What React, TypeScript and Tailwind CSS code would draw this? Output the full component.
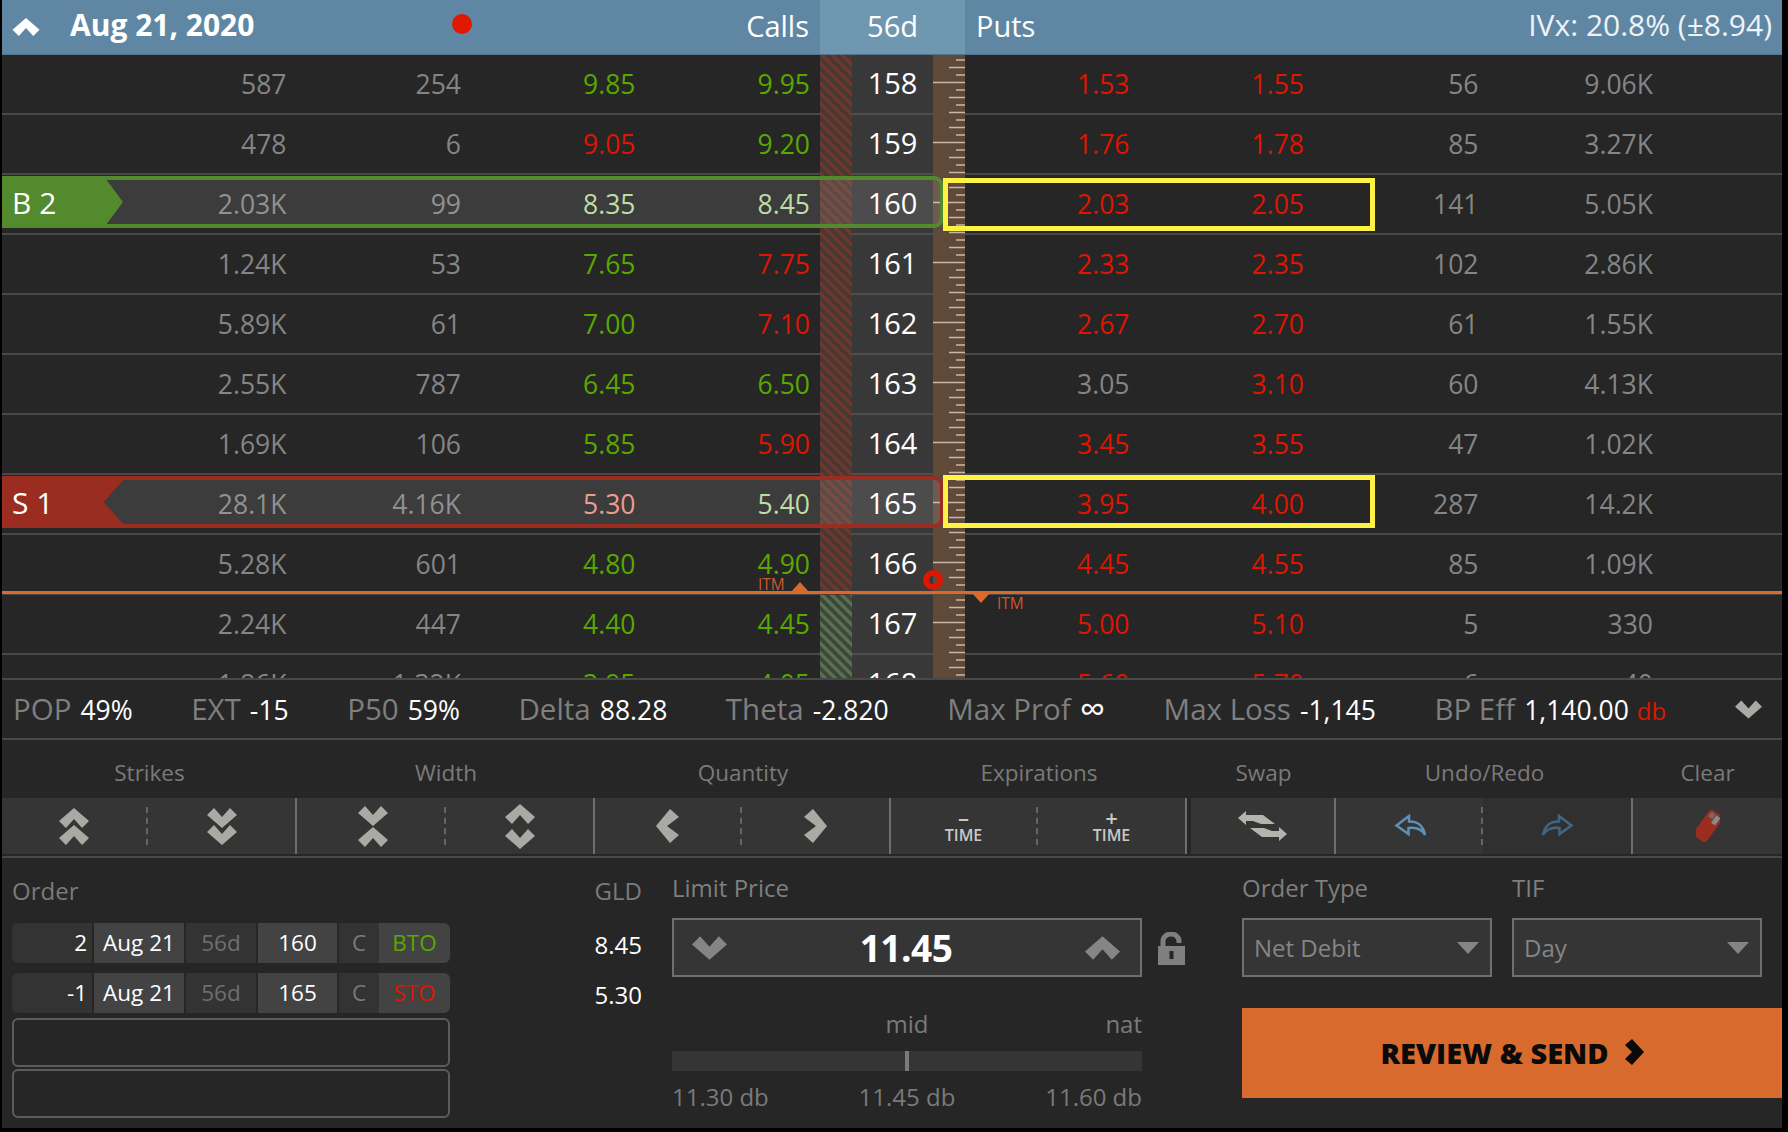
import React from "react";

const tone: Record<string, string> = {
  g: "text-[#58a800]",
  r: "text-[#dc1600]",
  n: "text-[#858585]",
  l: "text-[#b7d99b]",
  p: "text-[#ec8f82]",
};

type Row = {
  strike: string;
  calls: [string, string, string, string];
  puts: [string, string, string, string];
  c: [string, string];
  p: [string, string];
  itm?: boolean;
  leg?: "buy" | "sell";
};

const rows: Row[] = [
  { strike: "158", calls: ["587", "254", "9.85", "9.95"], puts: ["1.53", "1.55", "56", "9.06K"], c: ["g", "g"], p: ["r", "r"] },
  { strike: "159", calls: ["478", "6", "9.05", "9.20"], puts: ["1.76", "1.78", "85", "3.27K"], c: ["r", "g"], p: ["r", "r"] },
  { strike: "160", calls: ["2.03K", "99", "8.35", "8.45"], puts: ["2.03", "2.05", "141", "5.05K"], c: ["l", "l"], p: ["r", "r"], leg: "buy" },
  { strike: "161", calls: ["1.24K", "53", "7.65", "7.75"], puts: ["2.33", "2.35", "102", "2.86K"], c: ["g", "r"], p: ["r", "r"] },
  { strike: "162", calls: ["5.89K", "61", "7.00", "7.10"], puts: ["2.67", "2.70", "61", "1.55K"], c: ["g", "r"], p: ["r", "r"] },
  { strike: "163", calls: ["2.55K", "787", "6.45", "6.50"], puts: ["3.05", "3.10", "60", "4.13K"], c: ["g", "g"], p: ["n", "r"] },
  { strike: "164", calls: ["1.69K", "106", "5.85", "5.90"], puts: ["3.45", "3.55", "47", "1.02K"], c: ["g", "r"], p: ["r", "r"] },
  { strike: "165", calls: ["28.1K", "4.16K", "5.30", "5.40"], puts: ["3.95", "4.00", "287", "14.2K"], c: ["p", "l"], p: ["r", "r"], leg: "sell" },
  { strike: "166", calls: ["5.28K", "601", "4.80", "4.90"], puts: ["4.45", "4.55", "85", "1.09K"], c: ["g", "g"], p: ["r", "r"] },
  { strike: "167", calls: ["2.24K", "447", "4.40", "4.45"], puts: ["5.00", "5.10", "5", "330"], c: ["g", "g"], p: ["r", "r"], itm: true },
  { strike: "168", calls: ["1.86K", "1.32K", "3.95", "4.05"], puts: ["5.60", "5.70", "6", "40"], c: ["g", "g"], p: ["r", "r"], itm: true },
];

const ticks = [
  [5, 9],
  [12.5, 16],
  [20, 9],
  [27.5, 32],
  [35, 9],
  [42.5, 16],
  [50, 9],
  [57.5, 16],
];

const Ruler = () => (
  <svg width="32" height="60" className="block">
    {ticks.map(([y, w]) => (
      <rect key={y} x={32 - w} y={y - 0.75} width={w} height="1.5" fill="#c9b6a4" />
    ))}
  </svg>
);

const Cell = ({ children, className = "" }: { children?: React.ReactNode; className?: string }) => (
  <div className={`flex items-center justify-end border-b-2 border-[#484848] pr-[10px] text-[26.5px] leading-none ${className}`}>
    {children}
  </div>
);

const ChainRow = ({ row }: { row: Row }) => (
  <div className="relative grid h-[60px] grid-cols-[120px_174.5px_174.5px_174.5px_174.5px_32px_81px_32px_174.5px_174.5px_174.5px_174.5px_119px]">
    <div className="border-b-2 border-[#484848]" />
    <Cell className="text-[#858585]">{row.calls[0]}</Cell>
    <Cell className="text-[#858585]">{row.calls[1]}</Cell>
    <Cell className={tone[row.c[0]]}>{row.calls[2]}</Cell>
    <Cell className={tone[row.c[1]]}>{row.calls[3]}</Cell>
    <div
      className={
        row.itm
          ? "bg-[repeating-linear-gradient(45deg,#55704c_0,#55704c_3.535px,#3c4639_3.535px,#3c4639_7.071px)]"
          : "bg-[repeating-linear-gradient(45deg,#70362a_0,#70362a_3.535px,#483733_3.535px,#483733_7.071px)]"
      }
    />
    <div className="flex items-center justify-center border-b-2 border-[#4f4f4f] bg-[#383838] pb-[4px] text-[29px] leading-none text-white">
      {row.strike}
    </div>
    <div className="bg-[#5f4939]">
      <Ruler />
    </div>
    <Cell className={tone[row.p[0]]}>{row.puts[0]}</Cell>
    <Cell className={tone[row.p[1]]}>{row.puts[1]}</Cell>
    <Cell className="text-[#858585]">{row.puts[2]}</Cell>
    <Cell className="text-[#858585]">{row.puts[3]}</Cell>
    <div className="border-b-2 border-[#484848]" />

    {row.leg === "buy" && (
      <>
        <div className="absolute left-0 top-[1px] h-[52px] w-[942px] rounded-r-[10px] border-y-4 border-r-4 border-[#548a2e] bg-white/10" />
        <div className="absolute left-0 top-[1px] flex h-[52px] w-[121px] items-center bg-[#548a2e] pl-[10px] text-[30px] text-white [clip-path:polygon(0_0,84%_0,100%_50%,84%_100%,0_100%)]">
          B 2
        </div>
        <div className="absolute left-[941px] top-[3px] h-[53px] w-[432px] border-[5px] border-[#fef344]" />
      </>
    )}
    {row.leg === "sell" && (
      <>
        <div className="absolute left-0 top-[1px] h-[52px] w-[942px] rounded-r-[10px] border-y-4 border-r-4 border-[#9b2d20] bg-white/10" />
        <div className="absolute left-0 top-[1px] flex h-[52px] w-[121px] items-center bg-[#9b2d20] pl-[10px] text-[30px] text-white [clip-path:polygon(0_0,100%_0,100%_8%,84%_50%,100%_92%,100%_100%,0_100%)]">
          S 1
        </div>
        <div className="absolute left-[941px] top-0 h-[53px] w-[432px] border-[5px] border-[#fef344]" />
      </>
    )}
  </div>
);

const stats = [
  ["POP", "49%"],
  ["EXT", "-15"],
  ["P50", "59%"],
  ["Delta", "88.28"],
  ["Theta", "-2.820"],
  ["Max Prof", "∞"],
  ["Max Loss", "-1,145"],
  ["BP Eff", "1,140.00"],
];

const up = (y: number) => `15,${y} 30,${y + 13} 23,${y + 20} 15,${y + 11} 7,${y + 20} 0,${y + 13}`;
const down = (y: number) => `15,${y + 20} 30,${y + 7} 23,${y} 15,${y + 9} 7,${y} 0,${y + 7}`;

const Chevrons = ({
  points,
  w = 30,
  h,
  fill = "#aaaaa4",
  vw = 30,
  vh,
}: {
  points: string[];
  w?: number;
  h: number;
  fill?: string;
  vw?: number;
  vh?: number;
}) => (
  <svg width={w} height={h} viewBox={`0 0 ${vw} ${vh ?? h}`}>
    {points.map((p) => (
      <polygon key={p} points={p} fill={fill} />
    ))}
  </svg>
);

const Time = ({ sign }: { sign: string }) => (
  <div className="flex flex-col items-center text-[#c8c8c4]">
    <span className="h-[14px] text-[22px] font-semibold leading-[14px]">{sign}</span>
    <span className="mt-[3px] text-[16px] font-semibold leading-none">TIME</span>
  </div>
);

const ReplyArrow = ({ color, flip }: { color: string; flip?: boolean }) => (
  <svg width="33" height="24" viewBox="0 0 33 24" fill="none">
    <path
      d="M15 2 L2.5 11.5 L14.5 20 L14.5 14 C22 13 28 15.5 31 21 C29.5 12.5 24 7 15 7.5 Z"
      stroke={color}
      strokeWidth="2.5"
      strokeLinejoin="miter"
      transform={flip ? "matrix(-1 0 0 1 33 0)" : undefined}
    />
  </svg>
);

const Dash = () => <div className="h-[38px] border-l-2 border-dashed border-[#666666]" />;

const Half = ({ children, className = "flex-1" }: { children: React.ReactNode; className?: string }) => (
  <div className={`flex items-center justify-center ${className}`}>{children}</div>
);

const Group = ({ label, className, children, last }: { label: string; className: string; children: React.ReactNode; last?: boolean }) => (
  <div className={`flex flex-col ${className}`}>
    <div className="flex h-[58px] items-center justify-center pt-[8px] text-[22.5px] text-[#7a7a7a]">{label}</div>
    <div className={`flex h-[56px] items-center bg-[#353535] ${last ? "" : "border-r-2 border-[#6e6e6e]"}`}>{children}</div>
  </div>
);

const Leg = ({ qty, strike, side, color }: { qty: string; strike: string; side: string; color: string }) => (
  <div className="flex h-[40px] gap-[2px] overflow-hidden rounded-[6px] text-[22.5px] leading-none">
    <div className="flex w-[80px] items-center justify-end bg-[#333333] pr-[5px] text-white">{qty}</div>
    <div className="flex w-[90px] items-center justify-center bg-[#434343] text-white">Aug 21</div>
    <div className="flex w-[70px] items-center justify-center bg-[#333333] text-[#6f6f6f]">56d</div>
    <div className="flex w-[79px] items-center justify-center bg-[#434343] text-white">{strike}</div>
    <div className="flex w-[40px] items-center justify-center bg-[#333333] text-[#7a7a7a]">C</div>
    <div className={`-ml-[2px] flex w-[71px] items-center justify-center bg-[#434343] ${color}`}>{side}</div>
  </div>
);

const Dropdown = ({ label }: { label: string }) => (
  <div className="flex h-[59px] w-[250px] items-center justify-between border-2 border-[#6f6f6f] bg-[#353535] pl-[10px] pr-[11px] text-[24px] text-[#858585]">
    <span>{label}</span>
    <svg width="22" height="12" viewBox="0 0 22 12">
      <polygon points="0,0 22,0 11,12" fill="#858585" />
    </svg>
  </div>
);

export default function App() {
  return (
    <div className="h-[1132px] w-[1788px] bg-black font-['Open_Sans',sans-serif]">
      <div className="ml-[2px] h-[1128px] w-[1780px] overflow-hidden bg-[#262626]">
        {/* expiration header */}
        <div className="flex h-[55px] items-center border-b border-[#55738a] bg-[#5f87a4] text-[29px] leading-none text-white">
          <div className="ml-[10px] w-[28px]">
            <Chevrons points={[up(0)]} w={28} h={18} vh={20} fill="#ffffff" />
          </div>
          <div className="mb-[4px] ml-[30px] w-[184px] whitespace-nowrap text-[30px] font-bold">Aug 21, 2020</div>
          <div className="mb-[6px] ml-[198px] h-[20px] w-[20px] rounded-full bg-[#e01800]" />
          <div className="mb-[4px] w-[348px] pr-[11px] text-right">Calls</div>
          <div className="flex h-full w-[145px] items-center justify-center bg-[#6f97b0] pb-[4px]">56d</div>
          <div className="mb-[4px] ml-[11px]">Puts</div>
          <div className="mb-[4px] ml-auto pr-[10px] text-[30px] text-[#eef3f6]">IVx: 20.8% (±8.94)</div>
        </div>

        {/* option chain */}
        <div className="relative h-[623px] overflow-hidden">
          {rows.map((row) => (
            <ChainRow key={row.strike} row={row} />
          ))}
          <div className="absolute left-0 top-[536px] h-[3px] w-full bg-[#d96a2d]" />
          <span className="absolute left-[756px] top-[521px] text-[15.5px] leading-[16px] text-[#cb5a2a]">ITM</span>
          <svg className="absolute left-[789px] top-[527px]" width="18" height="10">
            <polygon points="0,10 9,0 18,10" fill="#d96a2d" />
          </svg>
          <svg className="absolute left-[970px] top-[538px]" width="18" height="10">
            <polygon points="0,0 18,0 9,10" fill="#d96a2d" />
          </svg>
          <span className="absolute left-[995px] top-[540px] text-[15.5px] leading-[16px] text-[#cb5a2a]">ITM</span>
          <div className="absolute left-[921px] top-[515px] h-[20px] w-[20px] rounded-full border-[6px] border-[#dc1600]" />
        </div>

        {/* trade stats */}
        <div className="flex h-[62px] items-center gap-[58.5px] border-y-2 border-[#484848] pl-[11px] pr-[20px] leading-none">
          {stats.map(([label, value]) => (
            <div key={label} className="flex items-baseline whitespace-nowrap">
              <span className="text-[29.5px] text-[#7f7f7f]">{label}</span>
              {value === "∞" ? (
                <span className="ml-[9px] flex h-[29px] items-center self-center text-[36px] text-white">{value}</span>
              ) : (
                <span className="ml-[9px] text-[26.5px] text-white">{value}</span>
              )}
              {label === "BP Eff" && <span className="ml-[8px] text-[24px] text-[#dc1600]">db</span>}
            </div>
          ))}
          <div className="ml-auto">
            <Chevrons points={[down(0)]} w={27} h={19} vh={20} />
          </div>
        </div>

        {/* adjust toolbar */}
        <div className="flex border-b-2 border-[#484848] pb-[2px]">
          <Group label="Strikes" className="w-[295px]">
            <Half className="w-[144px] flex-none"><Chevrons points={[up(0), up(17)]} h={37} /></Half>
            <Dash />
            <Half><Chevrons points={[down(0), down(17)]} h={37} /></Half>
          </Group>
          <Group label="Width" className="w-[298px]">
            <Half className="w-[147px] flex-none pl-[4px]"><Chevrons points={[down(0), up(21)]} h={41} /></Half>
            <Dash />
            <Half><Chevrons points={[up(0), down(25)]} h={45} /></Half>
          </Group>
          <Group label="Quantity" className="w-[296px]">
            <Half className="w-[145px] flex-none"><Chevrons points={["0,17 14,0 23,8 11,17 23,26 14,34"]} w={23} h={34} vw={23} /></Half>
            <Dash />
            <Half><Chevrons points={["23,17 9,0 0,8 12,17 0,26 9,34"]} w={23} h={34} vw={23} /></Half>
          </Group>
          <Group label="Expirations" className="w-[296px]">
            <Half className="w-[145px] flex-none"><Time sign="–" /></Half>
            <Dash />
            <Half><Time sign="+" /></Half>
          </Group>
          <Group label="Swap" className="w-[149px] pl-[4px]">
            <Half>
              <svg width="49" height="30" viewBox="0 0 49 30">
                <polygon points="0,7 8,0 8,4 25,4 37,13 23,13 15,10 8,10 8,14" fill="#b4b4ac" />
                <polygon points="49,23 41,30 41,26 24,26 12,17 26,17 34,20 41,20 41,16" fill="#b4b4ac" />
              </svg>
            </Half>
          </Group>
          <Group label="Undo/Redo" className="w-[297px]">
            <Half className="w-[145px] flex-none pl-[3px]"><ReplyArrow color="#5d92b5" /></Half>
            <Dash />
            <Half className="h-full flex-1 bg-[#303030]"><ReplyArrow color="#426680" flip /></Half>
          </Group>
          <Group label="Clear" className="w-[149px]" last>
            <Half>
              <svg width="24" height="32" viewBox="0 0 24 32">
                <g transform="rotate(36 12 16)">
                  <rect x="4" y="0" width="16" height="32" rx="3.5" fill="#9b2d20" />
                  <rect x="6.5" y="2.5" width="5" height="5.5" fill="#6d6d6d" />
                  <rect x="12.5" y="2.5" width="5" height="9" fill="#8a8a8a" />
                </g>
              </svg>
            </Half>
          </Group>
        </div>

        {/* order entry */}
        <div className="flex h-[270px] text-[24px] leading-none">
          <div className="ml-[10px] w-[438px] pt-[17px]">
            <div className="flex h-[32px] items-center text-[#7a7a7a]">Order</div>
            <div className="mt-[16px] flex flex-col gap-[10px]">
              <Leg qty="2" strike="160" side="BTO" color="text-[#58a800]" />
              <Leg qty="-1" strike="165" side="STO" color="text-[#dc1600]" />
            </div>
            <div className="mt-[5px] h-[49px] rounded-[6px] border-2 border-[#5c5c5c]" />
            <div className="mt-[2px] h-[49px] rounded-[6px] border-2 border-[#5c5c5c]" />
          </div>

          <div className="w-[192px] pt-[17px] text-right">
            <div className="flex h-[32px] items-center justify-end text-[#7a7a7a]">GLD</div>
            <div className="mt-[13px] flex h-[50px] items-center justify-end text-white">8.45</div>
            <div className="flex h-[50px] items-center justify-end text-white">5.30</div>
          </div>

          <div className="ml-[30px] w-[470px] pt-[14px]">
            <div className="flex h-[32px] items-center text-[#7f7f7f]">Limit Price</div>
            <div className="mt-[14px] flex h-[59px] items-center justify-between border-2 border-[#6f6f6f] bg-[#353535] pl-[18px] pr-[20px]">
              <Chevrons points={[down(0)]} w={35} h={24} vh={20} fill="#858585" />
              <span className="text-[37px] font-bold tracking-[-0.5px] text-white">11.45</span>
              <Chevrons points={[up(0)]} w={35} h={24} vh={20} fill="#858585" />
            </div>
            <div className="mt-[33px] grid h-[28px] grid-cols-3 items-center text-[#7a7a7a]">
              <span />
              <span className="text-center">mid</span>
              <span className="text-right">nat</span>
            </div>
            <div className="mt-[13px] flex h-[20px] justify-center bg-[#353535]">
              <div className="h-full w-[4px] bg-[#7a7a7a]" />
            </div>
            <div className="mt-[12px] flex h-[28px] items-center justify-between text-[#7a7a7a]">
              <span>11.30 db</span>
              <span>11.45 db</span>
              <span>11.60 db</span>
            </div>
          </div>

          <div className="ml-[16px] w-[84px] pt-[74px]">
            <svg width="27" height="33" viewBox="0 0 27 33" fill="none">
              <path d="M5 14 V9 a8 7 0 0 1 16 0 V11" stroke="#7f7f7f" strokeWidth="5" />
              <rect x="0" y="14" width="27" height="19" fill="#7f7f7f" />
              <rect x="11.5" y="19" width="4" height="8" fill="#262626" />
            </svg>
          </div>

          <div className="w-[540px] pt-[14px]">
            <div className="flex h-[32px] items-center text-[#7f7f7f]">
              <span className="w-[270px]">Order Type</span>
              <span>TIF</span>
            </div>
            <div className="mt-[14px] flex gap-[20px]">
              <Dropdown label="Net Debit" />
              <Dropdown label="Day" />
            </div>
            <button className="mt-[31px] flex h-[90px] w-full items-center justify-center gap-[16px] bg-[#d96a2d] pb-[2px] text-[29px] font-extrabold text-[#0a0a0a]">
              REVIEW &amp; SEND
              <svg width="19" height="26" viewBox="0 0 19 26">
                <polygon points="19,13 7,0 0,6 7,13 0,20 7,26" fill="#0a0a0a" />
              </svg>
            </button>
          </div>
        </div>
      </div>
    </div>
  );
}
